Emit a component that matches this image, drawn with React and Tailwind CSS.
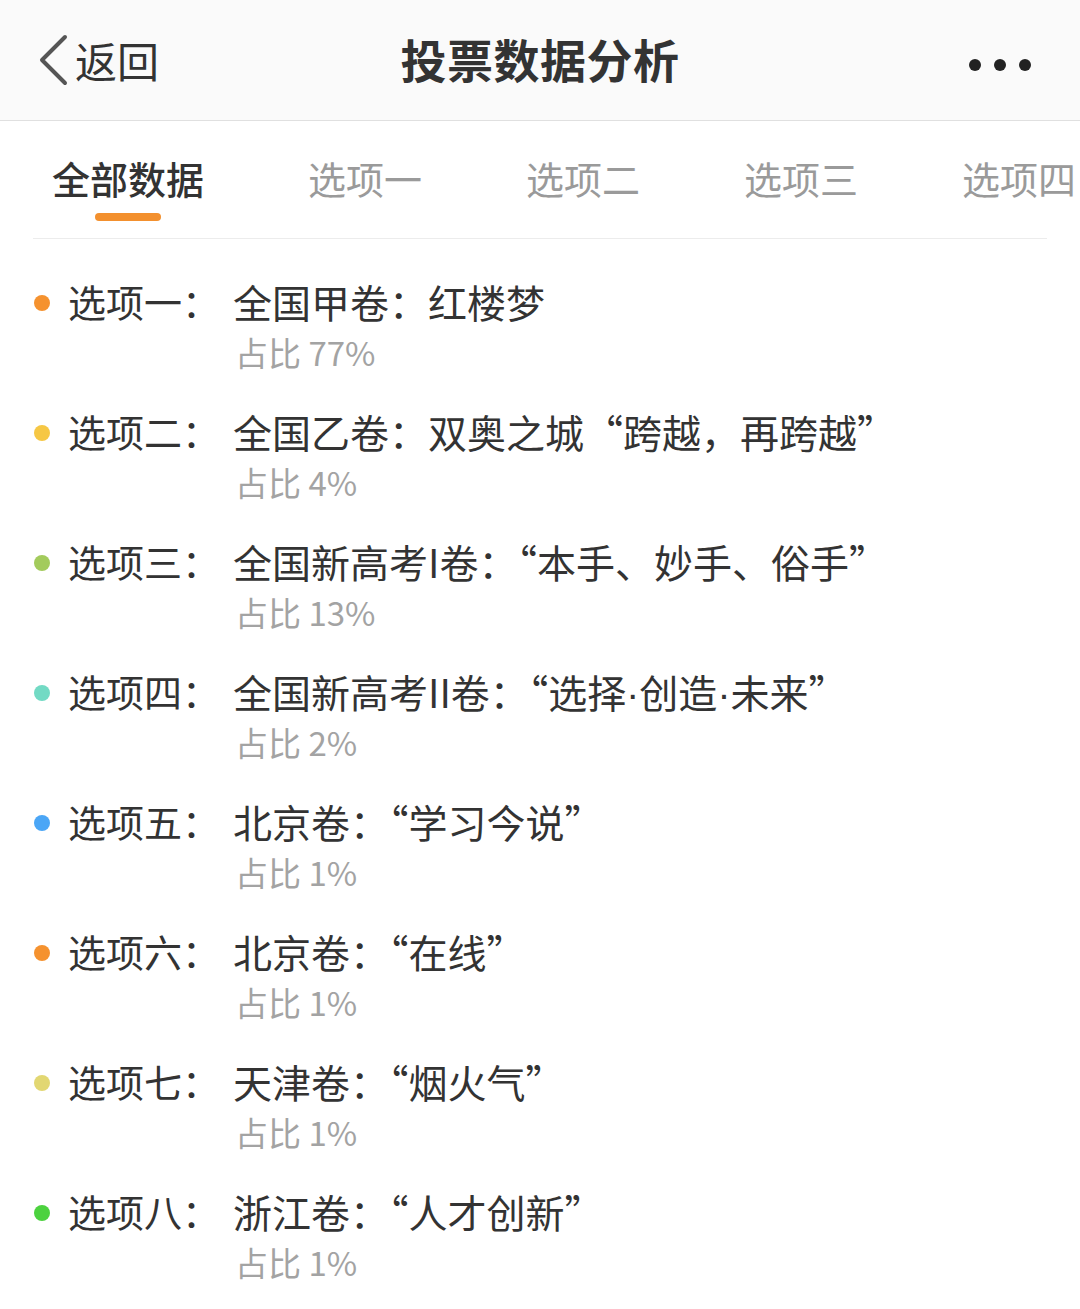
import React from 'react'

const tabs = ['全部数据', '选项一', '选项二', '选项三', '选项四']

// narrow separator dot, kept out of the CJK font so it isn't full width
const Dot = () => <span className="leading-none" style={{ fontFamily: '"Liberation Sans", sans-serif' }}>·</span>

const options = [
  { label: '选项一', text: '全国甲卷：红楼梦', share: '77%', dot: 'bg-[#f5922f]' },
  { label: '选项二', text: '全国乙卷：双奥之城“跨越，再跨越”', share: '4%', dot: 'bg-[#f6c744]' },
  { label: '选项三', text: '全国新高考I卷：“本手、妙手、俗手”', share: '13%', dot: 'bg-[#a3cb5c]' },
  {
    label: '选项四',
    text: <>全国新高考II卷：“选择<Dot />创造<Dot />未来”</>,
    share: '2%',
    dot: 'bg-[#72dac4]',
  },
  { label: '选项五', text: '北京卷：“学习今说”', share: '1%', dot: 'bg-[#4ba6f6]' },
  { label: '选项六', text: '北京卷：“在线”', share: '1%', dot: 'bg-[#f5922f]' },
  { label: '选项七', text: '天津卷：“烟火气”', share: '1%', dot: 'bg-[#e2d772]' },
  { label: '选项八', text: '浙江卷：“人才创新”', share: '1%', dot: 'bg-[#4cd23f]' },
]

const font = { fontFamily: '"Noto Sans CJK SC", "Noto Sans", sans-serif' }

const Header = () => (
  <div className="grid grid-cols-[1fr_auto_1fr] items-center h-[121px] bg-[#fafafa] border-b border-[#e0e0e0]">
    <div className="flex items-center pl-[37px] text-[#333]">
      <svg width="32" height="54" viewBox="0 0 32 54" fill="none">
        <polyline points="28,4 5,27 28,50" stroke="#555" strokeWidth="4" strokeLinecap="round" strokeLinejoin="round" />
      </svg>
      <span className="text-[42px] leading-none ml-[6px]">返回</span>
    </div>
    <div className="text-[46px] font-bold text-[#333] leading-none tracking-[0.5px] -mt-[4px]">投票数据分析</div>
    <div className="flex justify-end items-center gap-[13px] pr-[49px] pt-[10px]">
      <span className="w-[12px] h-[12px] rounded-full bg-[#222]" />
      <span className="w-[12px] h-[12px] rounded-full bg-[#222]" />
      <span className="w-[12px] h-[12px] rounded-full bg-[#222]" />
    </div>
  </div>
)

const Tabs = () => (
  <div>
    <div className="flex gap-[104px] pl-[52px] pt-[32px] overflow-hidden whitespace-nowrap">
      {tabs.map((t, i) => (
        <div key={t} className="flex flex-col items-center shrink-0">
          <span className={i === 0 ? 'text-[38px] leading-[50px] font-medium text-[#333]' : 'text-[38px] leading-[50px] text-[#9a9a9a]'}>{t}</span>
          <span className={i === 0 ? 'mt-[10px] w-[66px] h-[8px] rounded-full bg-[#f3902e]' : 'mt-[10px] h-[8px]'} />
        </div>
      ))}
    </div>
    <div className="mx-[33px] mt-[17px] h-px bg-[#ececec]" />
  </div>
)

const Row = ({ label, text, share, dot }) => (
  <div className="flex items-start h-[102px] pl-[34px] whitespace-nowrap">
    <div className="w-[34px] h-[52px] pt-[4px] flex items-center">
      <span className={`w-[16px] h-[16px] rounded-full ${dot}`} />
    </div>
    <div className="w-[165px] text-[38px] leading-[52px] text-[#333]">{label}：</div>
    <div className="flex flex-col">
      <div className="h-[52px] text-[39px] leading-[52px] text-[#333]">{text}</div>
      <div className="h-[50px] text-[33px] leading-[50px] text-[#a3a3a3] pl-[2px]">占比 {share}</div>
    </div>
  </div>
)

export default function App() {
  return (
    <div className="w-[1080px] min-h-[1309px] bg-white overflow-hidden" style={font} lang="zh-CN">
      <Header />
      <Tabs />
      <div className="flex flex-col gap-[28px] pt-[36px]">
        {options.map((o) => (
          <Row key={o.label} {...o} />
        ))}
      </div>
    </div>
  )
}
